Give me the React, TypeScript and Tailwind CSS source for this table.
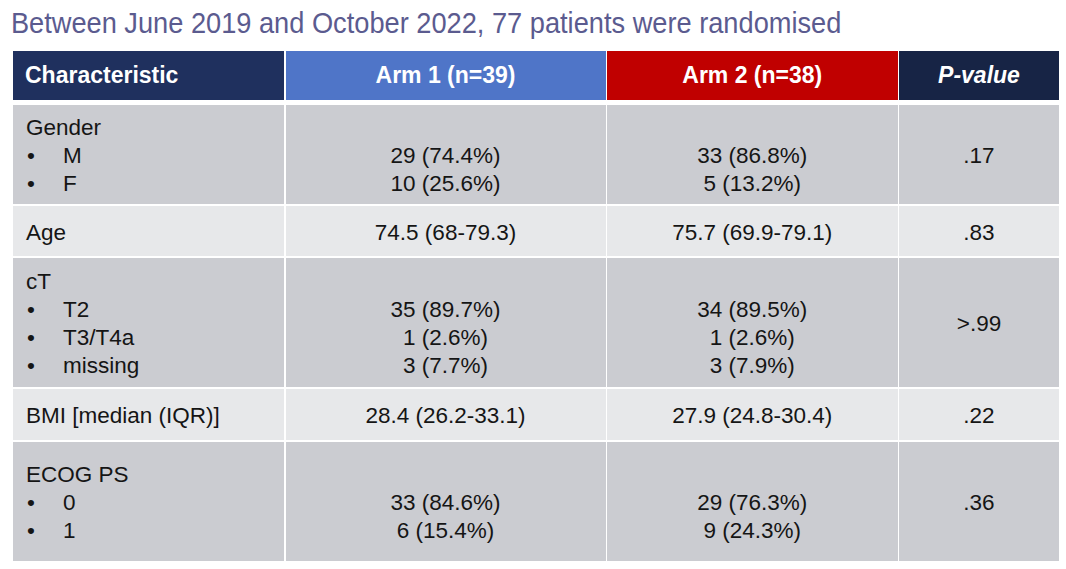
type Row = {
  label: string;
  items?: string[];
  arm1: string[];
  arm2: string[];
  p: string;
  h: string;
  bg: string;
};

const rows: Row[] = [
  {
    label: 'Gender',
    items: ['M', 'F'],
    arm1: ['29 (74.4%)', '10 (25.6%)'],
    arm2: ['33 (86.8%)', '5 (13.2%)'],
    p: '.17',
    h: 'h-[99px]',
    bg: 'bg-[#cbccd1]',
  },
  {
    label: 'Age',
    arm1: ['74.5 (68-79.3)'],
    arm2: ['75.7 (69.9-79.1)'],
    p: '.83',
    h: 'h-[50px]',
    bg: 'bg-[#e7e8ea]',
  },
  {
    label: 'cT',
    items: ['T2', 'T3/T4a', 'missing'],
    arm1: ['35 (89.7%)', '1 (2.6%)', '3 (7.7%)'],
    arm2: ['34 (89.5%)', '1 (2.6%)', '3 (7.9%)'],
    p: '>.99',
    h: 'h-[129px]',
    bg: 'bg-[#cbccd1]',
  },
  {
    label: 'BMI [median (IQR)]',
    arm1: ['28.4 (26.2-33.1)'],
    arm2: ['27.9 (24.8-30.4)'],
    p: '.22',
    h: 'h-[51px]',
    bg: 'bg-[#e7e8ea]',
  },
  {
    label: 'ECOG PS',
    items: ['0', '1'],
    arm1: ['33 (84.6%)', '6 (15.4%)'],
    arm2: ['29 (76.3%)', '9 (24.3%)'],
    p: '.36',
    h: 'h-[119px]',
    bg: 'bg-[#cbccd1]',
  },
];

const cols = 'grid grid-cols-[271px_320px_290.5px_160px] gap-x-[1.5px]';

function Values({ values, withLabel }: { values: string[]; withLabel: boolean }) {
  return (
    <div className="flex flex-col items-center">
      {withLabel && <span>&nbsp;</span>}
      {values.map((v) => (
        <span key={v}>{v}</span>
      ))}
    </div>
  );
}

export default function App() {
  return (
    <div
      className="w-[1066px] h-[569px] bg-white overflow-hidden"
      style={{ fontFamily: '"Liberation Sans", Arial, sans-serif' }}
    >
      <h1 className="pt-[5px] pl-[12px] text-[30px] leading-[36px] text-[#5b5b8f] whitespace-nowrap origin-left scale-x-[0.907]">
        Between June 2019 and October 2022, 77 patients were randomised
      </h1>

      <div className="mt-[10px] ml-[13px]">
        <div className={`${cols} h-[48.5px] text-white font-bold text-[23px] mb-[5.5px]`}>
          <div className="bg-[#1f305e] flex items-center pl-[12px]">Characteristic</div>
          <div className="bg-[#4f75c8] flex items-center justify-center">Arm 1 (n=39)</div>
          <div className="bg-[#c00000] flex items-center justify-center">Arm 2 (n=38)</div>
          <div className="bg-[#172445] flex items-center justify-center italic">P-value</div>
        </div>

        <div className="flex flex-col gap-y-[2px] text-[22.5px] leading-[28px] text-[#151515]">
          {rows.map((r) => {
            const multi = !!r.items;
            return (
              <div key={r.label} className={`${cols} ${r.h}`}>
                <div className={`${r.bg} flex flex-col justify-center pl-[13px] pt-[3px]`}>
                  <span>{r.label}</span>
                  {r.items?.map((it) => (
                    <div key={it} className="flex">
                      <span className="w-[37px] pl-[1px]">•</span>
                      <span>{it}</span>
                    </div>
                  ))}
                </div>
                <div className={`${r.bg} flex items-center justify-center pt-[3px]`}>
                  <Values values={r.arm1} withLabel={multi} />
                </div>
                <div className={`${r.bg} flex items-center justify-center pt-[3px]`}>
                  <Values values={r.arm2} withLabel={multi} />
                </div>
                <div className={`${r.bg} flex items-center justify-center pt-[3px]`}>{r.p}</div>
              </div>
            );
          })}
        </div>
      </div>
    </div>
  );
}
